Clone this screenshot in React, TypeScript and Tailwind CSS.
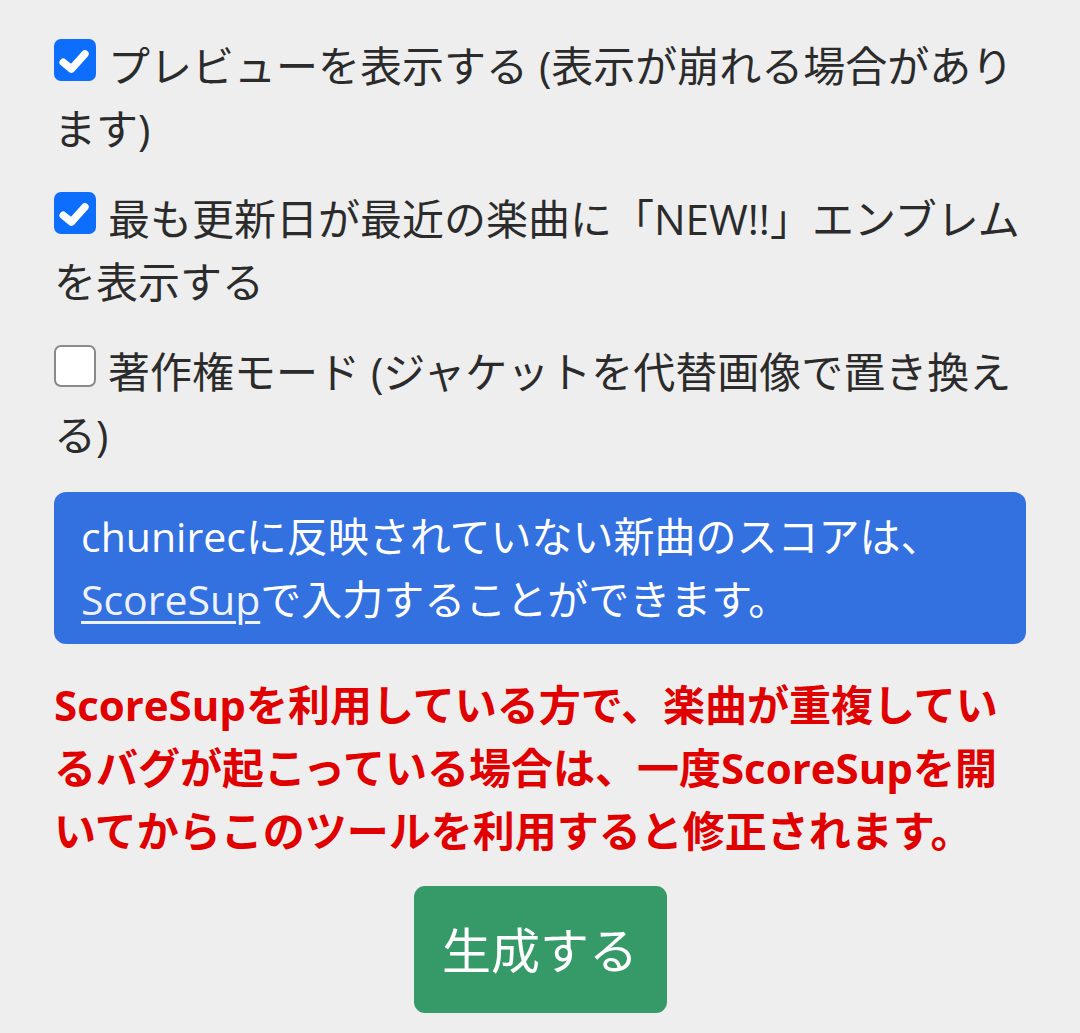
import React from "react";

function Box({ checked }: { checked: boolean }) {
  return checked ? (
    <span className="inline-block align-top mt-[5px] mr-[12px] w-[42px] h-[42px] rounded-[7px] bg-[#0d6efd]">
      <svg viewBox="0 0 20 20" className="w-full h-full">
        <path d="M4.4 11.1l3.9 3.2l6.4-7.2" fill="none" stroke="#fff" strokeWidth="3.6" strokeLinecap="round" strokeLinejoin="round" />
      </svg>
    </span>
  ) : (
    <span className="inline-block align-top mt-[5px] mr-[12px] w-[42px] h-[42px] rounded-[7px] bg-white border-[2px] border-[#8a8a8a] box-border" />
  );
}

function Option({ checked, children }: { checked: boolean; children: React.ReactNode }) {
  return (
    <label className="block text-[42px] leading-[63px] text-[#2b2b2b]">
      <Box checked={checked} />
      {children}
    </label>
  );
}

export default function App() {
  return (
    <div
      className="min-h-[1033px] w-[1080px] bg-[#eeeeee] pl-[54px] pr-[54px] pt-[34px] pb-[20px]"
      style={{ fontFamily: '"Open Sans", "Noto Sans CJK JP", sans-serif' }}
    >
      <div className="flex flex-col gap-[27px]">
        <Option checked>プレビューを表示する (表示が崩れる場合があります)</Option>
        <Option checked>最も更新日が最近の楽曲に「NEW!!」エンブレムを表示する</Option>
        <Option checked={false}>著作権モード (ジャケットを代替画像で置き換える)</Option>
      </div>

      <div className="mt-[26px] rounded-[12px] bg-[#3370e0] px-[27px] py-[13px] text-[41px] leading-[63px] text-white">
        chunirecに反映されていない新曲のスコアは、
        <br />
        <a className="underline decoration-[3px] underline-offset-[6px] text-[#eef2fb]">ScoreSup</a>で入力することができます。
      </div>

      <p className="mt-[29px] text-[42px] leading-[63px] font-bold text-[#e00000]">
        ScoreSupを利用している方で、楽曲が重複しているバグが起こっている場合は、一度ScoreSupを開いてからこのツールを利用すると修正されます。
      </p>

      <div className="mt-[24px] flex justify-center">
        <button className="h-[127px] w-[253px] rounded-[11px] bg-[#359a68] text-[49px] leading-[72px] text-white">
          生成する
        </button>
      </div>
    </div>
  );
}
